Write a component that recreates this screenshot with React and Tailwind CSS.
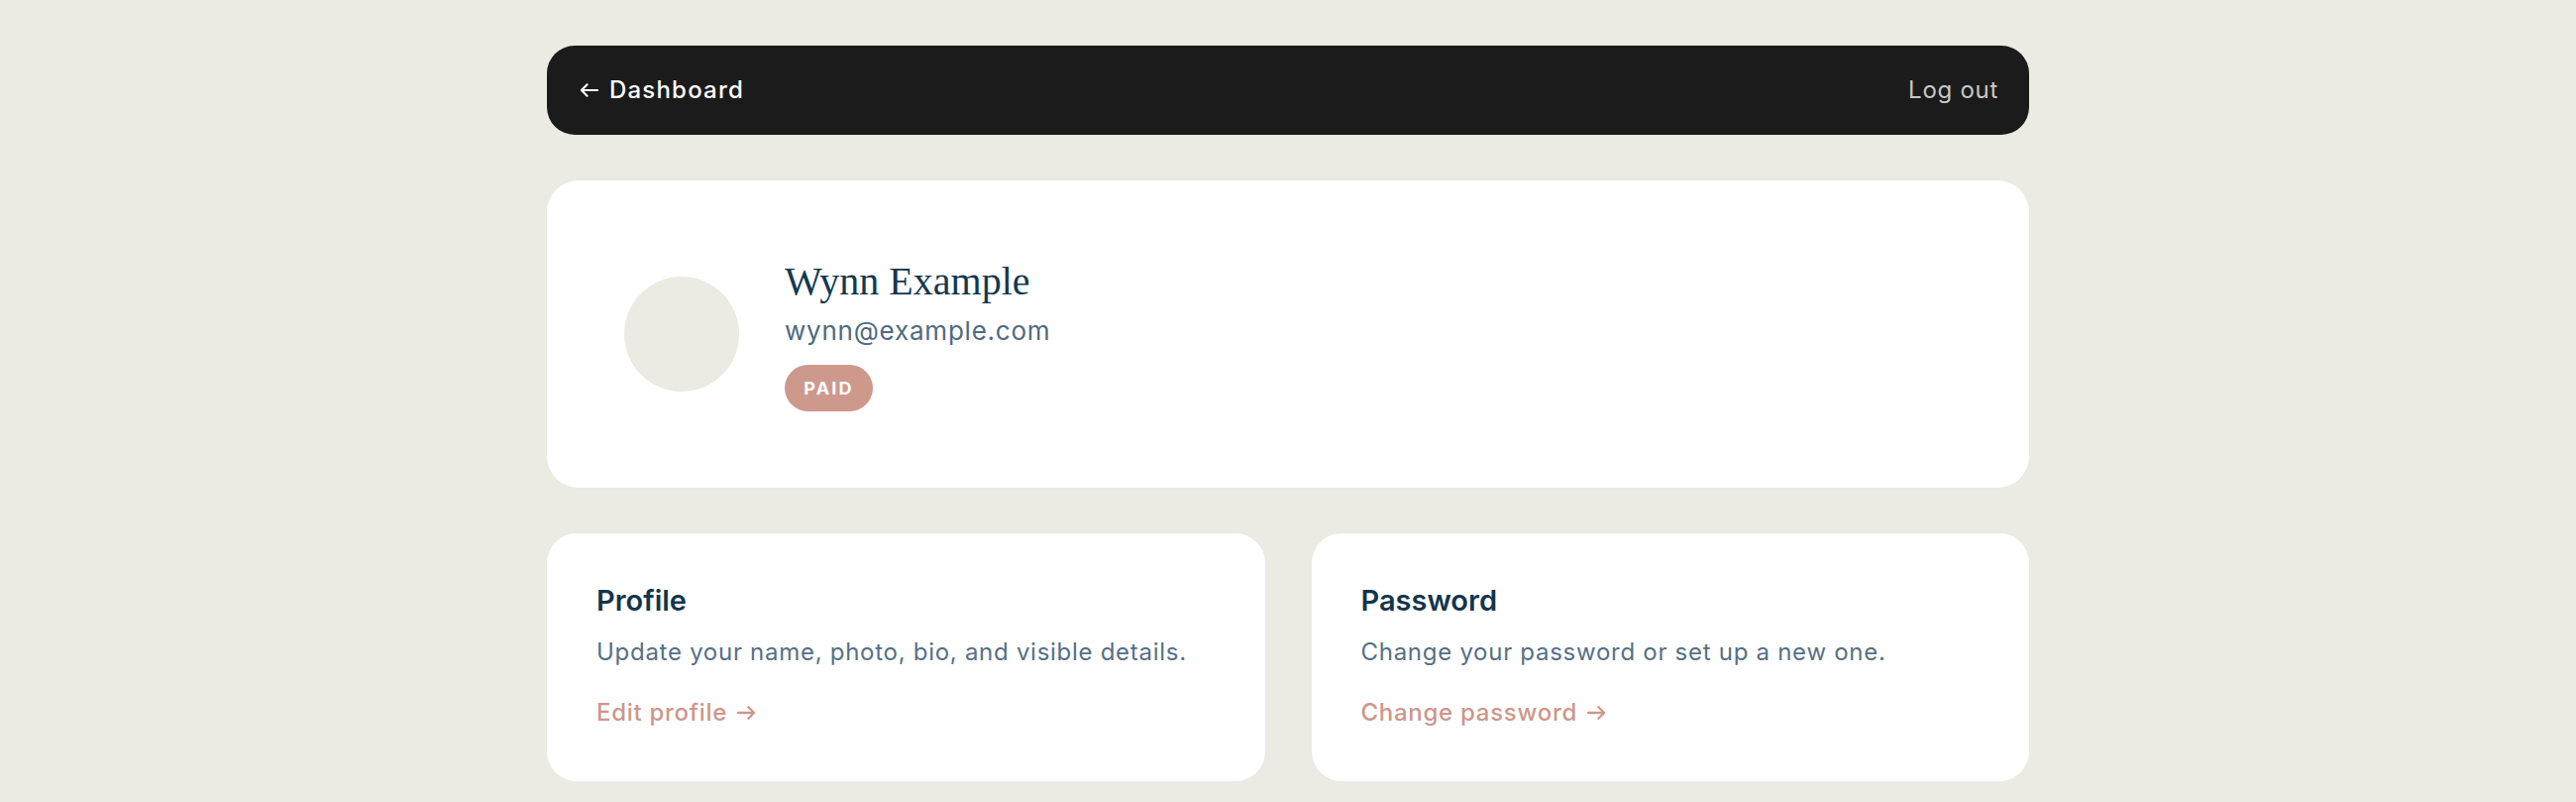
const sans = { fontFamily: 'Inter, "Open Sans", sans-serif' };

function ArrowLeft({ className }) {
  return (
    <svg viewBox="0 0 20 14" className={className} fill="none" stroke="currentColor" strokeWidth="2.2" strokeLinecap="round" strokeLinejoin="round">
      <path d="M19 7H2M8 1 2 7l6 6" />
    </svg>
  );
}

function ArrowRight({ className }) {
  return (
    <svg viewBox="0 0 20 14" className={className} fill="none" stroke="currentColor" strokeWidth="2.4" strokeLinecap="round" strokeLinejoin="round">
      <path d="M1 7h17M12 1l6 6-6 6" />
    </svg>
  );
}

const actions = [
  {
    title: 'Profile',
    description: 'Update your name, photo, bio, and visible details.',
    link: 'Edit profile',
  },
  {
    title: 'Password',
    description: 'Change your password or set up a new one.',
    link: 'Change password',
  },
];

export default function App() {
  return (
    <div className="min-h-screen bg-[#ebeae3] pt-[46px] pb-10" style={sans}>
      <div className="mx-auto w-[1496px] flex flex-col gap-[46px]">
        {/* Top bar */}
        <header className="h-[90px] rounded-[28px] bg-[#1b1b1b] flex items-center justify-between pl-[33px] pr-[31px]">
          <a className="flex items-center gap-[11px] text-white text-[24px] font-medium tracking-[0.05em]">
            <ArrowLeft className="w-[19px] h-[14px]" />
            Dashboard
          </a>
          <button className="text-[#c8c8c6] text-[24px] tracking-[0.03em]">Log out</button>
        </header>

        {/* Account summary */}
        <section className="h-[310px] rounded-[32px] bg-white flex items-center pl-[78px] gap-[46px]">
          <div className="w-[116px] h-[116px] rounded-full bg-[#ebeae3]" />
          <div className="flex flex-col items-start">
            <h1 className="text-[40px] leading-[48px] text-[#12394f]" style={{ fontFamily: '"Liberation Serif", serif' }}>
              Wynn Example
            </h1>
            <p className="mt-2 text-[26px] leading-[36px] tracking-[0.03em] text-[#4f6a7f]">wynn@example.com</p>
            <span className="mt-4 h-[47px] w-[89px] rounded-full bg-[#cd998d] text-white text-[18px] font-bold tracking-[0.12em] flex items-center justify-center">
              PAID
            </span>
          </div>
        </section>

        {/* Settings cards */}
        <div className="grid grid-cols-2 gap-[47px]">
          {actions.map((item, index) => (
            <div key={index} className="rounded-[30px] bg-white pl-[50px] pt-[50px] pb-[53px]">
              <h2 className="text-[29px] leading-[36px] font-semibold text-[#13354c]">{item.title}</h2>
              <p className="mt-[18px] text-[24px] leading-[32px] tracking-[0.03em] text-[#557086]">{item.description}</p>
              <a className="mt-[29px] flex items-center gap-[10px] text-[24px] leading-[32px] font-medium tracking-[0.03em] text-[#cd978b]">
                {item.link}
                <ArrowRight className="w-[19px] h-[14px]" />
              </a>
            </div>
          ))}
        </div>
      </div>
    </div>
  );
}
